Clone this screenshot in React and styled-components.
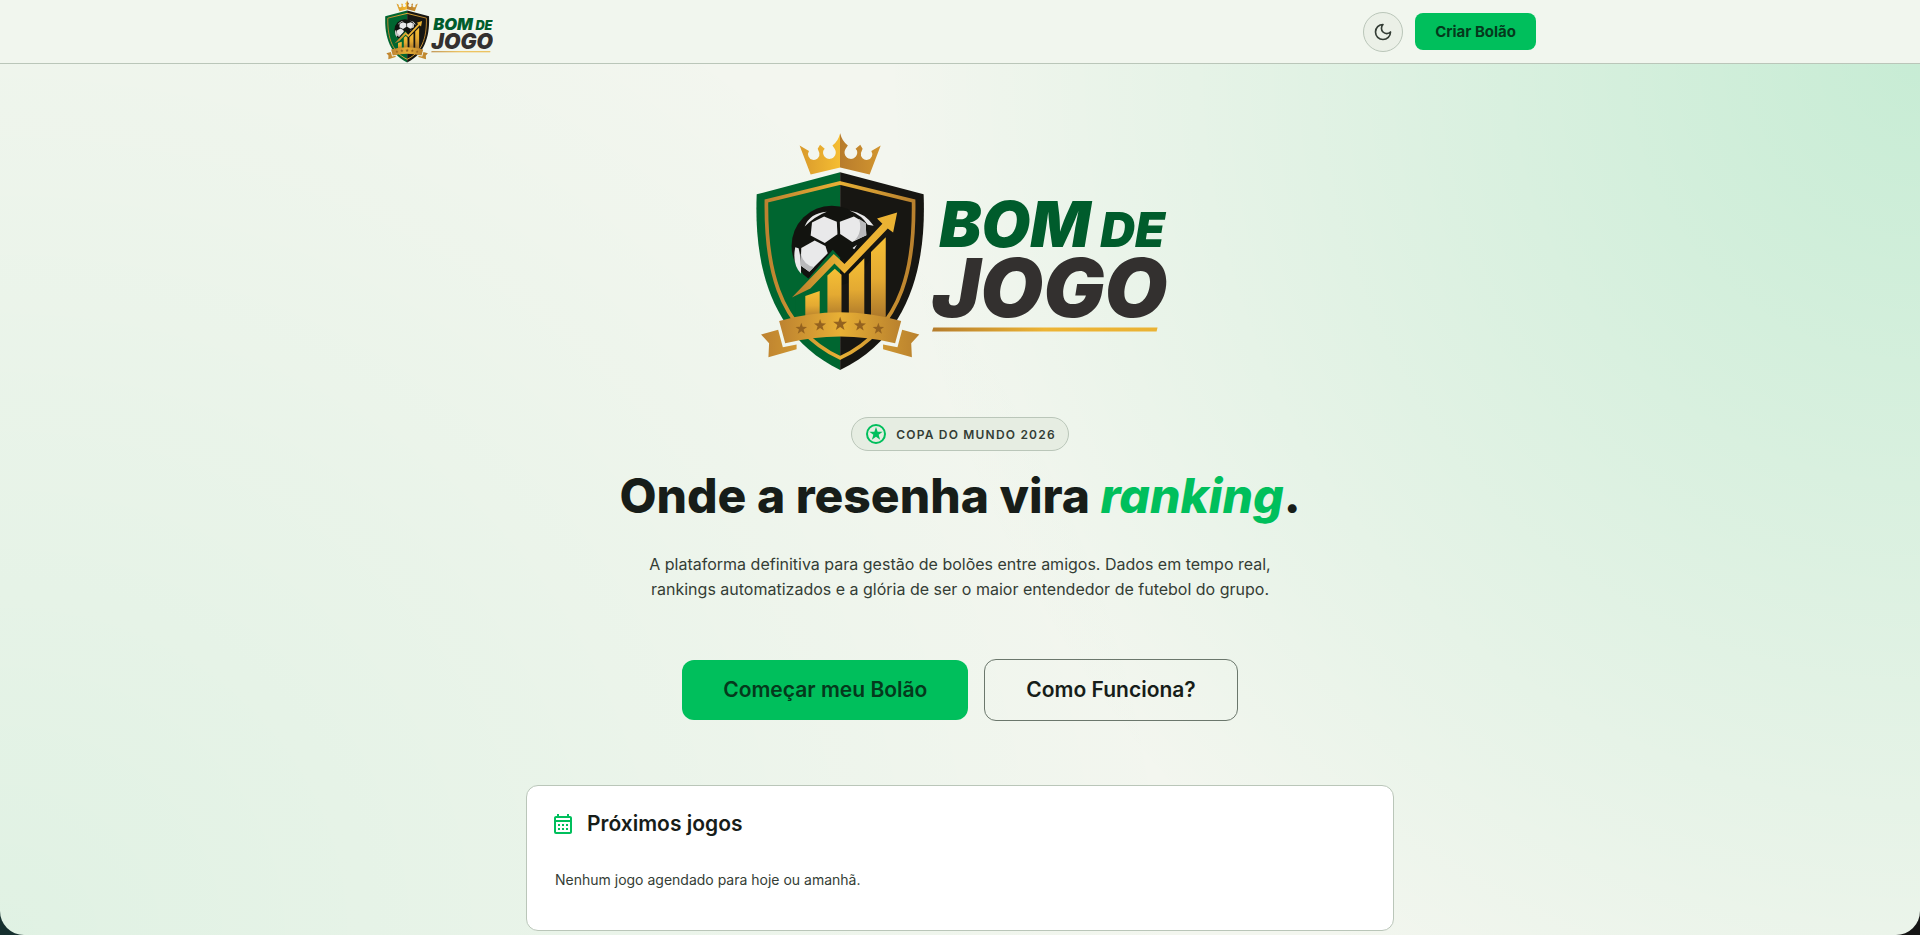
import { useId } from "react";
import styled, { createGlobalStyle } from "styled-components";
import { MdOutlineCalendarMonth } from "react-icons/md";

const colors = {
  green: "#00bf5c",
  onGreen: "#05391c",
  ink: "#171d19",
  body: "#343d35",
  border: "#bac6b9",
  surface: "#f1f6ee",
};

const GlobalStyle = createGlobalStyle`
  * {
    box-sizing: border-box;
  }

  body {
    margin: 0;
    background: linear-gradient(90deg, #16302f, #151515);
    color: ${colors.ink};
    font-family: Inter, "Liberation Sans", sans-serif;
  }

  h1, h2, p {
    margin: 0;
  }
`;

const Page = styled.div`
  min-height: 100vh;
  border-radius: 0 0 24px 24px;
  overflow: hidden;
  background:
    radial-gradient(ellipse 54% 115% at 100% 6%, rgba(0, 191, 92, 0.18), transparent),
    radial-gradient(ellipse 62% 120% at 0% 100%, rgba(0, 191, 92, 0.08), transparent),
    #f3f6ef;
`;

const Header = styled.header`
  background: ${colors.surface};
  border-bottom: 1px solid ${colors.border};
`;

const HeaderInner = styled.div`
  display: flex;
  align-items: center;
  justify-content: space-between;
  max-width: 1200px;
  margin: 0 auto;
  padding: 0 24px;
`;

const LogoLink = styled.a`
  display: flex;
`;

const LogoSvg = styled.svg`
  display: block;
  height: ${(props) => props.$height}px;
`;

const Actions = styled.div`
  display: flex;
  align-items: center;
  gap: 12px;
`;

const ThemeToggle = styled.button`
  display: grid;
  place-items: center;
  width: 40px;
  height: 40px;
  padding: 0;
  border: 1px solid ${colors.border};
  border-radius: 50%;
  background: #ebf0e7;
  color: ${colors.body};
  cursor: pointer;
`;

const Button = styled.button`
  padding: ${(props) => (props.$small ? "10px 20px" : "18px 41px")};
  border: ${(props) => (props.$outline ? "1px solid #6b776c" : "0")};
  border-radius: ${(props) => (props.$small ? 8 : 12)}px;
  background: ${(props) => (props.$outline ? "transparent" : colors.green)};
  color: ${(props) => (props.$outline ? colors.ink : colors.onGreen)};
  font-family: inherit;
  font-size: ${(props) => (props.$small ? 15 : 21)}px;
  font-weight: ${(props) => (props.$small ? 700 : 600)};
  line-height: ${(props) => (props.$small ? 17 : 24)}px;
  cursor: pointer;
`;

const Main = styled.main`
  display: flex;
  flex-direction: column;
  align-items: center;
  padding: 68px 24px 4px;
`;

const Badge = styled.div`
  display: flex;
  align-items: center;
  gap: 8px;
  height: 34px;
  margin-top: 45px;
  padding: 0 12px;
  border: 1px solid ${colors.border};
  border-radius: 17px;
  background: #e6ede2;
  color: ${colors.body};
  font-size: 12px;
  font-weight: 600;
  letter-spacing: 0.1em;

  svg {
    color: ${colors.green};
  }
`;

const Title = styled.h1`
  margin-top: 17px;
  font-size: 48px;
  font-weight: 800;
  line-height: 56px;
  text-align: center;

  em {
    color: ${colors.green};
  }
`;

const Lead = styled.p`
  max-width: 672px;
  margin-top: 28px;
  color: ${colors.body};
  font-size: 16px;
  line-height: 25px;
  text-align: center;
`;

const ButtonRow = styled.div`
  display: flex;
  align-items: center;
  gap: 16px;
  margin-top: 57px;
`;

const Card = styled.section`
  width: 100%;
  max-width: 868px;
  margin-top: 64px;
  padding: 24px;
  border: 1px solid ${colors.border};
  border-radius: 12px;
  background: #fff;
`;

const CardHeader = styled.div`
  display: flex;
  align-items: center;
  gap: 12px;

  svg {
    color: ${colors.green};
  }
`;

const CardTitle = styled.h2`
  font-size: 21px;
  font-weight: 600;
  line-height: 28px;
`;

const CardText = styled.p`
  padding: 32px 4px 16px;
  color: ${colors.body};
  font-size: 14px;
  line-height: 20px;
`;

const stars = [
  [188, 625, 18],
  [244, 615, 19],
  [304, 611, 22],
  [363, 615, 19],
  [418, 625, 18],
];

const starPoints = (cx, cy, r) => {
  const points = [];
  for (let i = 0; i < 10; i++) {
    const radius = i % 2 ? r * 0.4 : r;
    const angle = (Math.PI / 5) * i - Math.PI / 2;
    points.push(`${cx + radius * Math.cos(angle)},${cy + radius * Math.sin(angle)}`);
  }
  return points.join(" ");
};

const Logo = ({ height }) => {
  const id = useId();
  const gold = `url(#${id}gold)`;
  const half = `url(#${id}half)`;
  const bar = `url(#${id}bar)`;
  const shine = `url(#${id}shine)`;
  return (
    <LogoSvg $height={height} viewBox="41 38 1240 716" role="img" aria-label="Bom de Jogo">
      <defs>
        <linearGradient id={`${id}gold`}>
          <stop offset="0" stopColor="#bd8230" />
          <stop offset="0.5" stopColor="#e8b035" />
          <stop offset="1" stopColor="#b9812e" />
        </linearGradient>
        <linearGradient id={`${id}half`}>
          <stop offset="0" stopColor="#d99a2c" />
          <stop offset="0.5" stopColor="#f5bd32" />
          <stop offset="0.5" stopColor="#b87c2c" />
          <stop offset="1" stopColor="#d2952f" />
        </linearGradient>
        <linearGradient id={`${id}bar`} x2="0" y2="1">
          <stop offset="0" stopColor="#f6c035" />
          <stop offset="0.5" stopColor="#e4aa32" />
          <stop offset="1" stopColor="#a8742a" />
        </linearGradient>
        <linearGradient id={`${id}shine`}>
          <stop offset="0" stopColor="#b57c2c" />
          <stop offset="0.5" stopColor="#edb434" />
          <stop offset="1" stopColor="#eab233" />
        </linearGradient>
      </defs>

      {/* crown */}
      <path
        fill={half}
        d="M216 165 183 78 211 95A17 17 0 1 0 242 101L237 88 244 76 258 88 254 93A19 19 0 1 0 288 89L281 78Q298 67 304 42Q310 67 327 78L320 89A19 19 0 1 0 354 93L350 88 364 76 371 88 366 101A17 17 0 1 0 397 95L425 78 392 165 304 144Z"
      />

      {/* shield */}
      <path fill="#006630" d="M304 158 55 224C48 400 78 640 304 748Z" />
      <path fill="#171612" d="M304 158 553 224C560 400 530 640 304 748Z" />
      <path
        fill="none"
        stroke={gold}
        strokeWidth="11"
        d="M304 190 523 244C526 420 500 620 304 712C108 620 82 420 84 244Z"
      />

      {/* ball */}
      <circle cx="279" cy="378" r="120" fill="#12130f" />
      <g fill="#e9e9ea">
        <path d="M220 308 256 290 294 306 296 343 258 369 216 347Z" />
        <path d="M303 306 345 290 380 310 382 346 340 366 304 342Z" />
        <path d="M188 384 228 362 260 378 267 400 212 455 186 436Z" />
        <path d="M198 320Q214 280 264 276Q230 289 198 320Z" />
        <path d="M332 272Q380 280 404 318L386 315Q370 287 332 272Z" />
        <path d="M170 382Q160 432 187 461Q189 420 180 385Z" />
        <path d="M341 384 354 374 346 388Z" />
      </g>
      <path
        fill="#b9b9bb"
        d="M360 297 380 310 382 346 348 361Q372 335 360 297ZM186 400Q195 435 226 441L212 455 186 436Z"
      />
      <path fill="#006630" d="M172 520 282 389 304 413V600H172Z" />

      {/* growth bars and arrow */}
      <g fill={bar}>
        <path d="M200 527 243 512V600H200Z" />
        <path d="M266 466 288 446 308 464V600H266Z" />
        <path d="M330 462 376 415V600H330Z" />
        <path d="M396 396 440 352V600H396Z" />
      </g>
      <path
        fill={shine}
        d="M160 532 285 402 317 432 430 312 414 296 474 278 462 338 446 326 317 460 287 430 215 505Z"
      />

      {/* ribbon */}
      <path
        fill={gold}
        d="M119 628 68 642 92 668 90 710 174 686V672L133 680ZM489 628 540 642 516 668 518 710 432 686V672L475 680Z"
      />
      <path fill={gold} d="M122 602Q304 550 486 602L468 668Q304 628 140 668Z" />
      {stars.map(([cx, cy, r]) => (
        <polygon key={cx} fill="#94621f" points={starPoints(cx, cy, r)} />
      ))}

      {/* wordmark */}
      <text fontFamily="Inter, sans-serif" fontWeight="900" fontStyle="italic" fill="#005c2c">
        <tspan x="600" y="380" fontSize="188">
          BOM
        </tspan>
        <tspan x="1080" y="380" fontSize="144">
          DE
        </tspan>
        <tspan x="578" y="591" fontSize="242" fill="#33302f">
          JOGO
        </tspan>
      </text>
      <path fill={shine} d="M582 621H1251L1248 633H578Z" />
    </LogoSvg>
  );
};

const StarBadgeIcon = () => (
  <svg width="24" height="24" viewBox="0 0 24 24" aria-hidden="true">
    <circle cx="12" cy="12" r="9" fill="none" stroke="currentColor" strokeWidth="2" />
    <polygon fill="currentColor" points={starPoints(12, 12, 7)} />
  </svg>
);

const MoonIcon = () => (
  <svg
    width="20"
    height="20"
    viewBox="0 0 24 24"
    fill="none"
    stroke="currentColor"
    strokeWidth="2"
    strokeLinecap="round"
    strokeLinejoin="round"
    aria-hidden="true"
  >
    <path d="M12 3a6 6 0 0 0 9 9 9 9 0 1 1-9-9Z" />
  </svg>
);

const App = () => {
  return (
    <Page>
      <GlobalStyle />
      <Header>
        <HeaderInner>
          <LogoLink href="/">
            <Logo height={63} />
          </LogoLink>
          <Actions>
            <ThemeToggle type="button" aria-label="Alternar tema">
              <MoonIcon />
            </ThemeToggle>
            <Button type="button" $small>
              Criar Bolão
            </Button>
          </Actions>
        </HeaderInner>
      </Header>
      <Main>
        <Logo height={240} />
        <Badge>
          <StarBadgeIcon />
          COPA DO MUNDO 2026
        </Badge>
        <Title>
          Onde a resenha vira <em>ranking</em>.
        </Title>
        <Lead>
          A plataforma definitiva para gestão de bolões entre amigos. Dados em tempo real,
          rankings automatizados e a glória de ser o maior entendedor de futebol do grupo.
        </Lead>
        <ButtonRow>
          <Button type="button">Começar meu Bolão</Button>
          <Button type="button" $outline>
            Como Funciona?
          </Button>
        </ButtonRow>
        <Card>
          <CardHeader>
            <MdOutlineCalendarMonth size={24} />
            <CardTitle>Próximos jogos</CardTitle>
          </CardHeader>
          <CardText>Nenhum jogo agendado para hoje ou amanhã.</CardText>
        </Card>
      </Main>
    </Page>
  );
};

export default App;
